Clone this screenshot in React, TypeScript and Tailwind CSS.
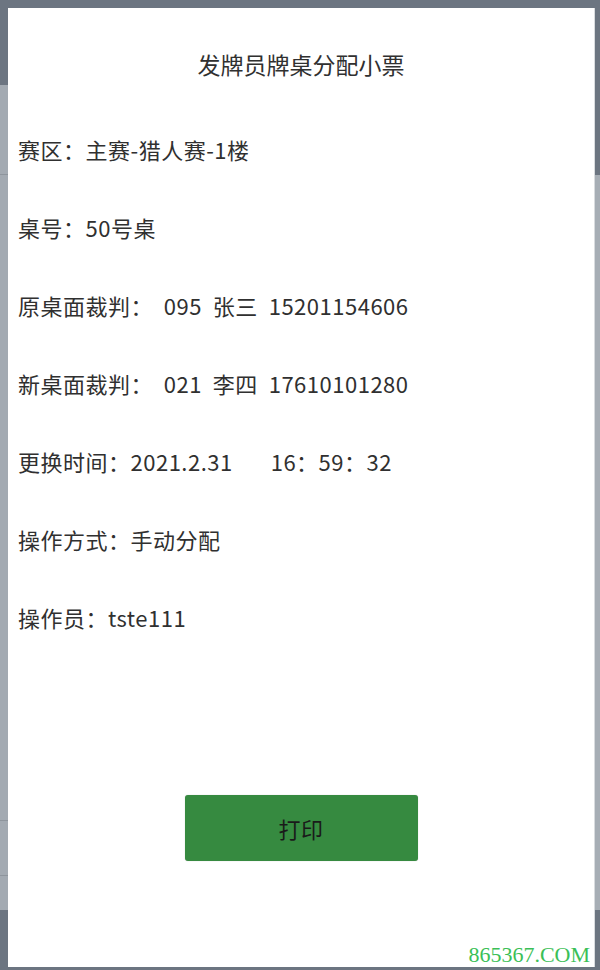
import React from 'react';

const ROWS = [
  '赛区：主赛-猎人赛-1楼',
  '桌号：50号桌',
  '原桌面裁判：  095  张三  15201154606',
  '新桌面裁判：  021  李四  17610101280',
  '更换时间：2021.2.31       16：59：32',
  '操作方式：手动分配',
  '操作员：tste111',
];

export default function App() {
  return (
    <div className="relative w-[600px] h-[970px] overflow-hidden flex bg-[#a3aab2]">
      {/* page behind the overlay */}
      <div className="flex-1 flex flex-col">
        <div className="h-[85px] bg-[#6c7581]" />
        <div className="h-[90px] border-b border-[#8e959d]" />
        <div className="flex-1" />
        <div className="h-[55px] border-t border-[#8e959d]" />
        <div className="h-[35px] border-t border-[#8e959d]" />
        <div className="h-[60px] bg-[#6c7581]" />
      </div>
      <div className="w-[6px] flex flex-col">
        <div className="h-[175px] bg-[#6c7581]" />
        <div className="flex-1 bg-[#a7aeb5]" />
        <div className="h-[60px] bg-[#6c7581]" />
      </div>

      {/* modal */}
      <div
        className="absolute left-[8px] top-[8px] right-[5px] bottom-[3px] bg-white border-r border-[#d9dcdf] flex flex-col pt-[17px] text-[#303030] text-[22px] tracking-[0.5px]"
        style={{ fontFamily: '"Noto Sans CJK SC", "Noto Sans", sans-serif' }}
      >
        <div className="text-center leading-[78px] text-[23px] tracking-normal">发牌员牌桌分配小票</div>
        <div className="mt-[7px] pl-[10px] flex flex-col">
          {ROWS.map(r => (
            <div key={r} className="h-[78px] leading-[78px] whitespace-pre">{r}</div>
          ))}
        </div>
        <button className="mt-[139px] mx-auto w-[233px] h-[66px] rounded-[3px] bg-[#368a40] text-[#1a1a1a] text-[22px] shadow-[0_0_1px_rgba(0,0,0,0.3)]">
          打印
        </button>
        <div
          className="absolute right-[4px] bottom-[1px] text-[22px] leading-none tracking-normal text-[#3bbf57]"
          style={{ fontFamily: '"Liberation Serif", serif' }}
        >
          865367.COM
        </div>
      </div>
    </div>
  );
}
